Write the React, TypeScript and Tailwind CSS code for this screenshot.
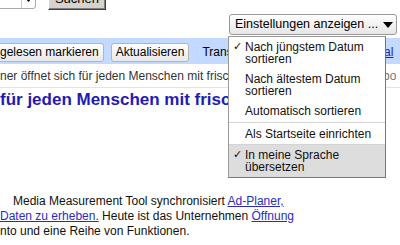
import React from "react";

const Check = () => (
  <span className="absolute left-[4px] top-[4px] text-[11px] leading-[12px] font-['DejaVu_Sans',sans-serif]">
    ✓
  </span>
);

const MenuItem: React.FC<{ checked?: boolean; active?: boolean; children: React.ReactNode }> = ({
  checked,
  active,
  children,
}) => (
  <div className={`relative pl-[16px] pr-[6px] py-[4px] leading-[12px] ${active ? "bg-[#dddddd]" : ""}`}>
    {checked && <Check />}
    {children}
  </div>
);

const App: React.FC = () => {
  return (
    <div className="relative w-[400px] h-[245px] overflow-hidden bg-white text-[12px] text-[#111] font-['Liberation_Sans',Arial,sans-serif]">
      {/* top search row, mostly scrolled out */}
      <div className="h-[38px] flex flex-col">
        <div className="flex items-start -mt-[12px]">
          <div className="-ml-[10px] w-[46px] h-[21px] flex bg-white border border-[#aaa] rounded-br-[3px]">
            <div className="flex-1" />
            <div className="w-[14px] border-l border-[#ccc] flex items-end justify-center pb-[6px]">
              <svg width="7" height="4" viewBox="0 0 7 4">
                <path d="M0 0H7L3.5 4Z" fill="#000" />
              </svg>
            </div>
          </div>
          <button className="ml-[12px] w-[58px] h-[22px] overflow-hidden bg-[#d6d3ce] border border-t-white border-l-white border-r-[#404040] border-b-[#404040] shadow-[inset_-1px_-1px_0_#808080] text-[13px] leading-[20px] text-black">
            Suchen
          </button>
        </div>
        <div className="flex justify-end mt-[4px] pr-[3px]">
          <div className="relative">
            <button className="w-[168px] h-[21px] flex items-center pl-[5px] pr-[3px] border border-[#999] rounded-[3px] bg-gradient-to-b from-white to-[#e6e6e6] text-[12.5px] text-black">
              <span className="flex-1 text-left whitespace-nowrap">Einstellungen anzeigen ...</span>
              <svg width="10" height="6" viewBox="0 0 10 6">
                <path d="M0 0H10L5 6Z" fill="#000" />
              </svg>
            </button>
            {/* dropdown menu */}
            <div className="absolute left-[-1px] top-[22px] w-[158px] z-10 bg-white border border-[#999] border-r-[#777] border-b-[#777] text-[12px] text-[#111]">
              <MenuItem checked>
                Nach jüngstem Datum
                <br />
                sortieren
              </MenuItem>
              <MenuItem>
                Nach ältestem Datum
                <br />
                sortieren
              </MenuItem>
              <MenuItem>Automatisch sortieren</MenuItem>
              <div className="my-[1px] h-px bg-[#d4d4d4]" />
              <MenuItem>Als Startseite einrichten</MenuItem>
              <div className="h-px bg-[#d4d4d4]" />
              <MenuItem checked active>
                In meine Sprache
                <br />
                übersetzen
              </MenuItem>
            </div>
          </div>
        </div>
      </div>

      {/* toolbar */}
      <div className="h-[26px] bg-[#c3d9ff] flex items-start pt-[5px] whitespace-nowrap text-[12px]">
        <button className="-ml-[4px] h-[19px] pl-[3px] pr-[4px] border border-[#b5b5b5] rounded-[3px] bg-gradient-to-b from-white to-[#e8e8e8] text-black leading-[17px]">
          gelesen markieren
        </button>
        <button className="ml-[7px] h-[19px] px-[4px] border border-[#b5b5b5] rounded-[3px] bg-gradient-to-b from-white to-[#e8e8e8] text-black leading-[17px]">
          Aktualisieren
        </button>
        <span className="ml-[13px] w-[33px] overflow-hidden leading-[19px] text-black">Translate</span>
        <span className="flex-1" />
        <a className="w-[10px] overflow-hidden mr-[6px] leading-[19px] text-[#1f1fb0] underline">al</a>
      </div>

      {/* entry line */}
      <div className="h-[24px] flex items-center border-b border-[#e3e3e3] whitespace-nowrap text-[#333]">
        <span className="w-[228px] shrink-0 overflow-hidden">
          ner öffnet sich für jeden Menschen mit frischen Ideen
        </span>
        <span className="ml-[155px] w-[17px] overflow-hidden text-[#777]">bo</span>
      </div>

      {/* entry title */}
      <h2 className="w-[228px] overflow-hidden pt-[2px] text-[17px] leading-[20px] font-bold text-[#1d1db4] whitespace-nowrap">
        für jeden Menschen mit frischen Ideen
      </h2>

      {/* entry body */}
      <p className="mt-[84px] leading-[15px] whitespace-nowrap text-[#111]">
        <span className="pl-[13px]">
          Media Measurement Tool synchronisiert <a className="text-[#2b2bc4] underline">Ad-Planer,</a>
        </span>
        <br />
        <a className="text-[#2b2bc4] underline">Daten zu erheben.</a> Heute ist das Unternehmen{" "}
        <a className="text-[#2b2bc4] underline">Öffnung</a>
        <br />
        nto und eine Reihe von Funktionen.
      </p>
    </div>
  );
};

export default App;
